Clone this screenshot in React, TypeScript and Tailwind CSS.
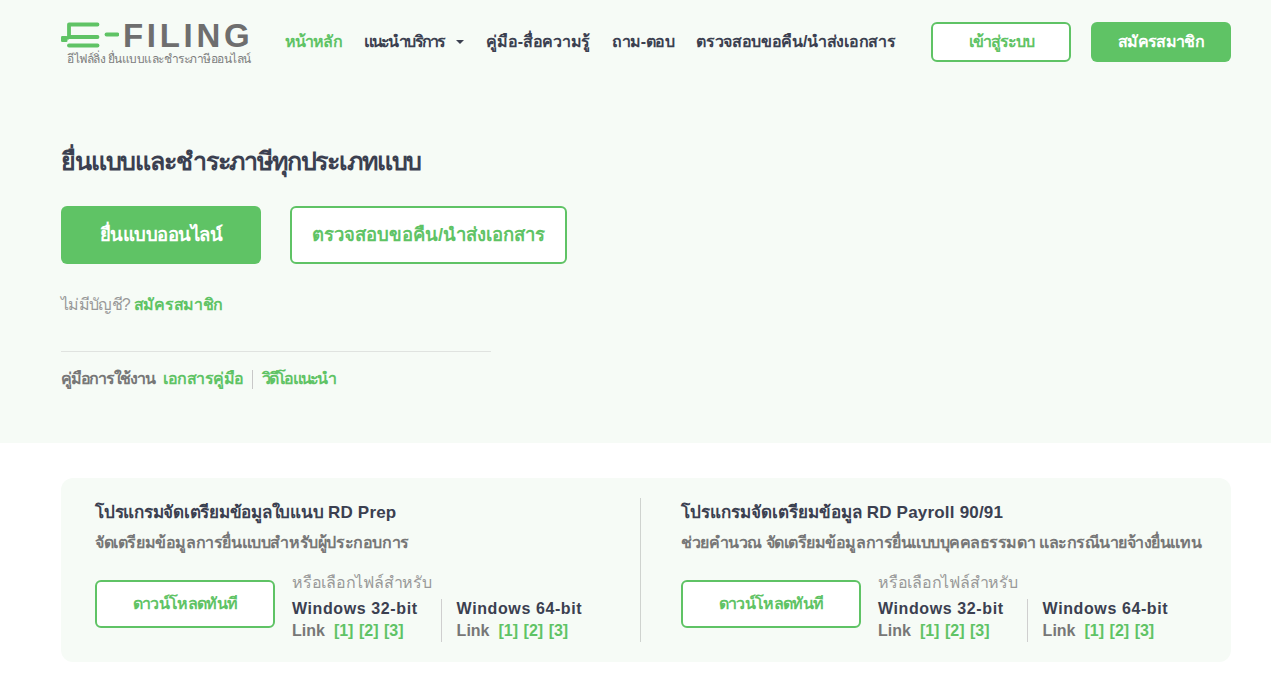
import type { ReactNode } from "react";

const font = "font-['Liberation_Sans','Noto_Sans','Noto_Sans_CJK_SC',sans-serif]";

function Logo() {
  return (
    <div className="mt-[21px] flex w-[190px] flex-col self-start">
      <div className="flex h-[28px] items-center">
        <svg width="58" height="26" viewBox="0 0 58 26" className="shrink-0">
          <path d="M36.5 2.5H8V15H36.5" fill="none" stroke="#5fc365" strokeWidth="3.8" strokeLinecap="round" strokeLinejoin="round" />
          <path d="M8 23.5H36.5" fill="none" stroke="#5fc365" strokeWidth="3.8" strokeLinecap="round" />
          <rect x="0" y="14" width="6.5" height="6" rx="1.2" fill="#5fc365" />
          <rect x="6" y="14" width="2" height="3.5" fill="#5fc365" />
          <path d="M45.5 12.5H56.5" fill="none" stroke="#5fc365" strokeWidth="3.8" strokeLinecap="round" />
        </svg>
        <span className="ml-[4px] text-[33px] leading-none font-bold tracking-[3.7px] text-[#6e6e6e]">FILING</span>
      </div>
      <div className="mt-[3px] pl-[6px] text-[12px] leading-[14px] tracking-[-0.5px] whitespace-nowrap text-[#7d7d7d]">อีไฟล์ลิ่ง ยื่นแบบและชำระภาษีออนไลน์</div>
    </div>
  );
}

function NavItem({ children, active = false, track }: { children: ReactNode; active?: boolean; track: string }) {
  return <a className={`text-[16px] leading-6 font-bold whitespace-nowrap ${track} ${active ? "text-[#5fc365]" : "text-[#3b4050]"}`}>{children}</a>;
}

function Osc({ bit }: { bit: string }) {
  return (
    <div className="flex h-[43px] flex-col justify-between">
      <div className="text-[16px] leading-[20px] font-bold tracking-[0.6px] whitespace-nowrap text-[#3b4050]">Windows {bit}-bit</div>
      <div className="mb-[1px] flex gap-[5.5px] text-[16px] leading-[20px] font-bold text-[#777]">
        <span className="mr-[3.5px]">Link</span>
        <a className="text-[#5fc365]">[1]</a>
        <a className="text-[#5fc365]">[2]</a>
        <a className="text-[#5fc365]">[3]</a>
      </div>
    </div>
  );
}

function Card({ title, desc, descTrack }: { title: ReactNode; desc: string; descTrack: string }) {
  return (
    <div className="flex flex-col">
      <div className="text-[17px] leading-[30px] font-bold whitespace-nowrap text-[#3b4050]">{title}</div>
      <div className={`text-[16px] leading-[30px] font-bold whitespace-nowrap text-[#777] ${descTrack}`}>{desc}</div>
      <div className="mt-[14px] flex items-center">
        <button className="mb-[6px] flex h-[48px] w-[180px] shrink-0 items-center justify-center rounded-[6px] border-2 border-[#5fc365] bg-white text-[16px] font-bold tracking-[-0.7px] text-[#5fc365]">ดาวน์โหลดทันที</button>
        <div className="ml-[17px] flex flex-col">
          <div className="text-[16px] leading-[22px] tracking-[-0.25px] whitespace-nowrap text-[#999]">หรือเลือกไฟล์สำหรับ</div>
          <div className="mt-[5px] flex">
            <Osc bit="32" />
            <div className="ml-[23px] border-l border-[#cfcfcf] pl-[15px]"><Osc bit="64" /></div>
          </div>
        </div>
      </div>
    </div>
  );
}

export default function App() {
  return (
    <div className={`min-h-[700px] bg-white ${font}`}>
      <section className="h-[443px] bg-[#f6fbf6] pr-[40px] pl-[61px]">
        <header className="flex h-[84px] items-center">
          <Logo />
          <nav className="ml-[34px] flex items-center gap-[22px]">
            <NavItem active track="tracking-[-0.9px]">หน้าหลัก</NavItem>
            <NavItem track="tracking-[-1.8px]">
              <span className="flex items-center gap-[12px]">แนะนำบริการ<span className="h-0 w-0 border-x-[4px] border-t-[4px] border-x-transparent border-t-[#3b4050]" /></span>
            </NavItem>
            <NavItem track="tracking-[-0.25px]">คู่มือ-สื่อความรู้</NavItem>
            <NavItem track="tracking-[-0.45px]">ถาม-ตอบ</NavItem>
            <NavItem track="tracking-[-0.3px]">ตรวจสอบขอคืน/นำส่งเอกสาร</NavItem>
          </nav>
          <div className="ml-auto flex gap-[20px]">
            <button className="h-[40px] w-[140px] rounded-[6px] border-2 border-[#5fc365] bg-white text-[16px] font-bold tracking-[-1px] text-[#5fc365]">เข้าสู่ระบบ</button>
            <button className="h-[40px] w-[140px] rounded-[6px] bg-[#5fc365] text-[16px] font-bold tracking-[-0.7px] text-white">สมัครสมาชิก</button>
          </div>
        </header>
        <h1 className="mt-[55px] text-[25px] leading-[44px] font-bold tracking-[-1.15px] text-[#3b4050]">ยื่นแบบและชำระภาษีทุกประเภทแบบ</h1>
        <div className="mt-[23px] flex gap-[29px]">
          <button className="h-[58px] w-[200px] rounded-[6px] bg-[#5fc365] text-[18.5px] font-bold tracking-[-0.5px] text-white">ยื่นแบบออนไลน์</button>
          <button className="h-[58px] w-[277px] rounded-[6px] border-2 border-[#5fc365] bg-white text-[18.5px] font-bold text-[#5fc365]">ตรวจสอบขอคืน/นำส่งเอกสาร</button>
        </div>
        <p className="mt-[29px] text-[16px] leading-[24px] tracking-[-0.7px] text-[#999]">ไม่มีบัญชี? <a className="font-bold tracking-[-0.3px] text-[#5fc365]">สมัครสมาชิก</a></p>
        <div className="mt-[34px] w-[430px] border-t border-[#e0e3e0] pt-[15px]">
          <div className="flex items-center text-[16px] leading-[24px] font-bold whitespace-nowrap">
            <span className="tracking-[-1.25px] text-[#777]">คู่มือการใช้งาน</span>
            <a className="ml-[9px] tracking-[-0.5px] text-[#5fc365]">เอกสารคู่มือ</a>
            <span className="mx-[8.5px] h-[19px] border-l border-[#c8c8c8]" />
            <a className="tracking-[-1.8px] text-[#5fc365]">วิดีโอแนะนำ</a>
          </div>
        </div>
      </section>
      <section className="pt-[35px] pr-[40px] pl-[61px]">
        <div className="flex h-[184px] rounded-[12px] bg-[#f6fbf6] py-[20px] pl-[34px]">
          <div className="w-[545px]"><Card descTrack="tracking-[-0.4px]" title={<><span className="tracking-[-0.25px]">โปรแกรมจัดเตรียมข้อมูลใบแนบ</span> <span className="tracking-[0.2px]">RD Prep</span></>} desc="จัดเตรียมข้อมูลการยื่นแบบสำหรับผู้ประกอบการ" /></div>
          <div className="h-[144px] border-l border-[#cfd3cf]" />
          <div className="pl-[40px]"><Card descTrack="tracking-[-0.47px]" title={<>โปรแกรมจัดเตรียมข้อมูล <span className="tracking-[0.2px]">RD Payroll 90/91</span></>} desc="ช่วยคำนวณ จัดเตรียมข้อมูลการยื่นแบบบุคคลธรรมดา และกรณีนายจ้างยื่นแทน" /></div>
        </div>
      </section>
    </div>
  );
}
